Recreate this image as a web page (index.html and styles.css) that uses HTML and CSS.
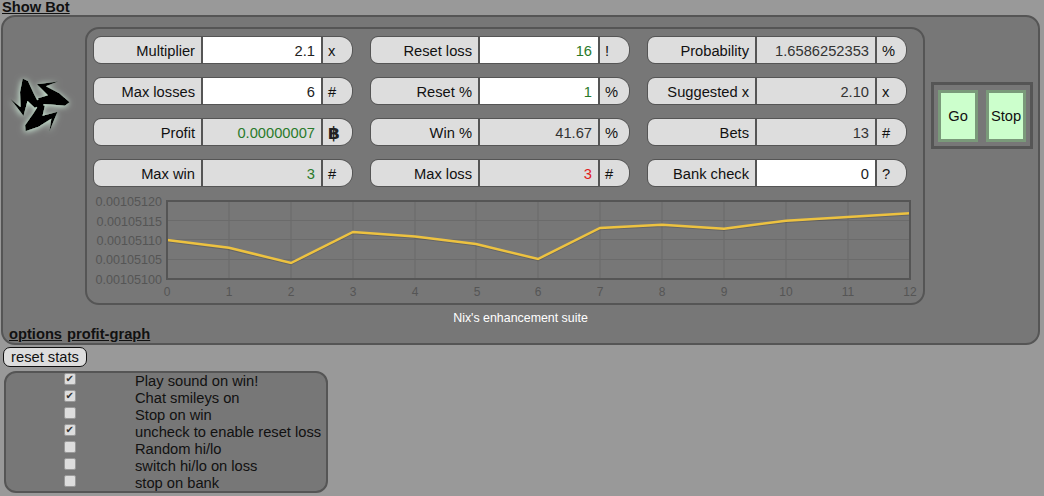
FILE: index.html
```html
<!DOCTYPE html>
<html lang="en">
<head>
<meta charset="utf-8">
<title>Bot</title>
<link rel="stylesheet" href="styles.css">
</head>
<body>
<a class="show-bot" href="#">Show Bot</a>
<section class="panel">
  <div class="panel-main">
    <div class="logo">
      <svg width="79" height="80" viewBox="3 0 79 80">
        <defs>
          <filter id="glow" x="-40%" y="-40%" width="180%" height="180%">
            <feDropShadow dx="-0.500" dy="1" stdDeviation="3" flood-color="#d8f8e2" flood-opacity="1"/>
          </filter>
          <path id="arm" d="M39.300 34 L34 24 L28 11 L22.700 8.500 L20 22 L20.500 37 L10.500 29 L23.500 46 L27.500 31 L35 38 Z"/>
        </defs>
        <g filter="url(#glow)" fill="#050505">
          <use href="#arm"/>
          <use href="#arm" transform="rotate(120 39.300 34)"/>
          <use href="#arm" transform="rotate(240 39.300 34)"/>
          <circle cx="39.300" cy="34" r="4.400"/>
        </g>
      </svg>
    </div>
    <div class="inner">
      <div class="stats">
        <div class="pill"><span class="cell label">Multiplier</span><span class="cell value input">2.1</span><span class="cell unit">x</span></div>
        <div class="pill"><span class="cell label">Reset loss</span><span class="cell value input good">16</span><span class="cell unit">!</span></div>
        <div class="pill"><span class="cell label">Probability</span><span class="cell value">1.6586252353</span><span class="cell unit">%</span></div>
        <div class="pill"><span class="cell label">Max losses</span><span class="cell value input">6</span><span class="cell unit">#</span></div>
        <div class="pill"><span class="cell label">Reset %</span><span class="cell value input good">1</span><span class="cell unit">%</span></div>
        <div class="pill"><span class="cell label">Suggested x</span><span class="cell value">2.10</span><span class="cell unit">x</span></div>
        <div class="pill"><span class="cell label">Profit</span><span class="cell value good">0.00000007</span><span class="cell unit coin">฿</span></div>
        <div class="pill"><span class="cell label">Win %</span><span class="cell value">41.67</span><span class="cell unit">%</span></div>
        <div class="pill"><span class="cell label">Bets</span><span class="cell value">13</span><span class="cell unit">#</span></div>
        <div class="pill"><span class="cell label">Max win</span><span class="cell value good">3</span><span class="cell unit">#</span></div>
        <div class="pill"><span class="cell label">Max loss</span><span class="cell value bad">3</span><span class="cell unit">#</span></div>
        <div class="pill"><span class="cell label">Bank check</span><span class="cell value input">0</span><span class="cell unit">?</span></div>
      </div>
      <svg class="chart" width="836" height="115" viewBox="87 187 836 115">
        <g class="grid-lines">
          <path d="M229 201V279M291 201V279M353 201V279M415 201V279M476 201V279M538 201V279M600 201V279M662 201V279M724 201V279M786 201V279M848 201V279"/>
          <path d="M167 220.500H910M167 239.500H910M167 259.500H910"/>
        </g>
        <polyline class="line-shadow" points="167,241 229,249 291,264 353,233 415,237.500 476,245 538,260 600,229 662,225.700 724,229.700 786,221.700 848,218 910,214.300"/>
        <polyline class="line" points="167,240 229,247.700 291,263 353,232 415,236.500 476,244 538,259 600,228 662,224.700 724,228.700 786,220.700 848,217 910,213.300"/>
        <rect class="frame" x="167" y="201" width="743" height="78"/>
        <g class="y-axis">
          <text x="162" y="206">0.00105120</text>
          <text x="162" y="226">0.00105115</text>
          <text x="162" y="245">0.00105110</text>
          <text x="162" y="264">0.00105105</text>
          <text x="162" y="284">0.00105100</text>
        </g>
        <g class="x-axis">
          <text x="167" y="296">0</text>
          <text x="229" y="296">1</text>
          <text x="291" y="296">2</text>
          <text x="353" y="296">3</text>
          <text x="415" y="296">4</text>
          <text x="477" y="296">5</text>
          <text x="538" y="296">6</text>
          <text x="600" y="296">7</text>
          <text x="662" y="296">8</text>
          <text x="724" y="296">9</text>
          <text x="786" y="296">10</text>
          <text x="848" y="296">11</text>
          <text x="910" y="296">12</text>
        </g>
      </svg>
    </div>
    <div class="controls">
      <button class="action" type="button">Go</button>
      <button class="action" type="button">Stop</button>
    </div>
  </div>
  <p class="suite">Nix's enhancement suite</p>
  <nav class="tabs"><a href="#">options</a><a href="#">profit-graph</a></nav>
</section>
<button class="reset" type="button">reset stats</button>
<section class="options">
  <input type="checkbox" checked><span>Play sound on win!</span>
  <input type="checkbox" checked><span>Chat smileys on</span>
  <input type="checkbox"><span>Stop on win</span>
  <input type="checkbox" checked><span>uncheck to enable reset loss</span>
  <input type="checkbox"><span>Random hi/lo</span>
  <input type="checkbox"><span>switch hi/lo on loss</span>
  <input type="checkbox"><span>stop on bank</span>
</section>
</body>
</html>
```
FILE: styles.css
```css
* { box-sizing: border-box; }
html, body { height: 100%; }
body {
  margin: 0;
  background: #999;
  color: #111;
  font-family: "Liberation Sans", Arial, sans-serif;
  font-size: 14.700px;
  overflow: hidden;
}
a { color: #111; font-weight: bold; }
.show-bot {
  display: block;
  height: 15px;
  padding-left: 2px;
  font-size: 14.700px;
  line-height: 14px;
}
.panel {
  width: 1039px;
  height: 330px;
  margin-left: 1px;
  background: #777;
  border: 2px solid #555;
  border-radius: 14px;
}
.panel-main {
  display: flex;
  padding-top: 10px;
}
.logo {
  width: 82px;
  padding-top: 43px;
}
.logo svg { display: block; }
.inner {
  width: 840px;
  height: 278px;
  border: 2px solid #555;
  border-radius: 14px;
}
.stats {
  display: grid;
  grid-template-columns: repeat(3, 260px);
  grid-auto-rows: 28px;
  gap: 13px 17px;
  padding: 7px 0 0 6px;
}
.pill {
  display: flex;
  gap: 2px;
  background: #555;
  border: 1px solid #555;
  border-radius: 8px 13px 13px 8px;
  overflow: hidden;
  line-height: 28px;
}
.cell { background: #ddd; color: #111; white-space: nowrap; }
.label { width: 107px; padding-right: 6px; text-align: right; }
.value { width: 118px; padding-right: 6px; text-align: right; color: #333; }
.unit { flex: 1; padding-left: 5px; }
.coin { font-family: "DejaVu Sans", sans-serif; font-size: 17px; font-weight: bold; color: #222; }
.input { background: #fff; color: #222; }
.good { color: #2a7a2a; }
.bad { color: #e02020; }
.chart { display: block; }
.grid-lines path { fill: none; stroke: #6b6b6b; stroke-width: 1; }
.frame { fill: none; stroke: #555; stroke-width: 2; }
.line { fill: none; stroke: #edc240; stroke-width: 2.500; }
.line-shadow { fill: none; stroke: rgba(0, 0, 0, 0.15); stroke-width: 2.500; }
.chart text {
  fill: #555;
  font-family: "Liberation Sans", Arial, sans-serif;
  font-size: 12.600px;
}
.y-axis text { text-anchor: end; }
.x-axis text { text-anchor: middle; font-size: 12px; }
.controls {
  display: flex;
  gap: 8px;
  width: 102px;
  height: 67px;
  margin: 55px 0 0 6px;
  padding: 5px 4px 4px;
  border: 3px solid #555;
}
.action {
  width: 40px;
  padding: 0;
  background: #cfc;
  border: 3px solid #7a9a7a;
  color: #111;
  font: 14.700px "Liberation Sans", Arial, sans-serif;
}
.suite {
  margin: 6px 0 0;
  color: #fff;
  font-size: 12.400px;
  line-height: 14px;
  text-align: center;
}
.tabs {
  display: flex;
  gap: 5px;
  margin-top: 1px;
  padding-left: 6px;
  line-height: 16px;
}
.reset {
  display: block;
  width: 84px;
  height: 20px;
  margin: 2px 0 0 3px;
  padding: 0;
  background: #ddd;
  border: 1px solid #111;
  border-radius: 7px;
  color: #111;
  font: 14.700px "Liberation Sans", Arial, sans-serif;
}
.options {
  display: grid;
  grid-template-columns: 127px 1fr;
  column-gap: 2px;
  grid-auto-rows: 17px;
  width: 324px;
  height: 122px;
  margin: 4px 0 0 4px;
  background: #777;
  border: 2px solid #555;
  border-radius: 12px;
  line-height: 17px;
}
.options input {
  appearance: none;
  position: relative;
  justify-self: center;
  width: 12px;
  height: 12px;
  margin: 0;
  background: #ddd;
  border: 1px solid #999;
  border-radius: 2px;
}
.options input:checked::before {
  content: "✔";
  position: absolute;
  left: 1px;
  top: -2px;
  color: #333;
  font: 10px/14px "DejaVu Sans", sans-serif;
}
```
